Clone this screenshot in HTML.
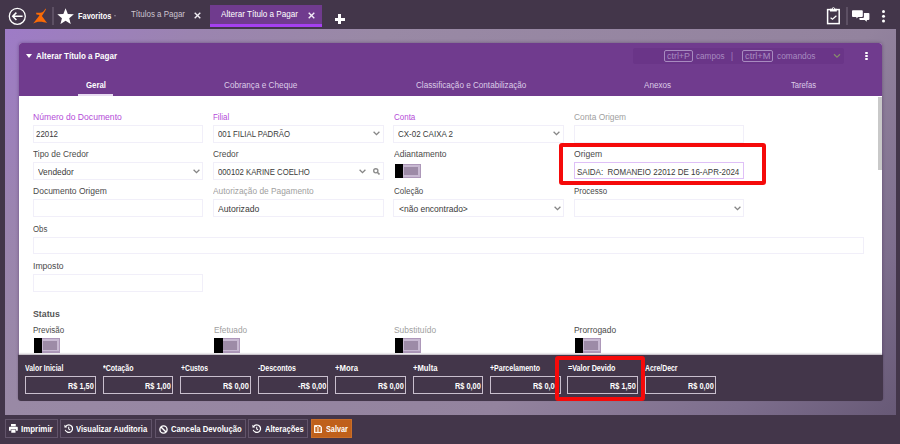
<!DOCTYPE html>
<html><head><meta charset="utf-8">
<style>
*{box-sizing:border-box;margin:0;padding:0}
html,body{width:900px;height:444px;overflow:hidden}
body{background:#43364a;font-family:"Liberation Sans",sans-serif;font-size:10px;color:#333;position:relative}
.abs{position:absolute}
.t{position:absolute;white-space:pre;transform-origin:0 50%;line-height:12px;height:12px}
#bg{left:4.7px;top:28.700px;width:890.900px;height:386.500px;background:linear-gradient(135deg,#9e7bc7 0%,#9b84b0 15%,#9989a5 30%,#93839e 68%,#7d6e8d 87%,#675976 100%)}
#card{left:19.1px;top:43px;width:862.600px;height:312px;background:#fff;border-radius:3px 3px 0 0;overflow:hidden}
#cardsh{left:19.1px;top:43px;width:862.600px;height:312px;border-radius:3px 3px 0 0;box-shadow:0 0 3.5px rgba(50,20,70,.45)}
#head{left:0;top:0;width:100%;height:53px;background:#703b8e}
.inp{position:absolute;height:18px;border:1px solid #f1eff9;background:#fff}
.tog{position:absolute;width:26px;height:14.6px;background:#ad98b9}
.tog b{position:absolute;left:8.3px;top:1.3px;right:1.3px;bottom:1.3px;background:#c8b9d2}
.tog u{position:absolute;left:9.2px;top:2.9px;right:3.2px;bottom:2.9px;background:#9d8ba7}
.tog i{position:absolute;left:0;top:0;width:8.3px;height:14.6px;background:#000}
#foot{left:18px;top:355px;width:865px;height:45.8px;background:#43364a;border-radius:0 0 3px 3px;box-shadow:0 -1px 2px rgba(40,20,50,.35)}
.fb{position:absolute;top:376.3px;width:70.8px;height:18px;border:1px solid #c9bfce}
.btn{position:absolute;top:419.4px;height:18.4px;border:1px solid #62546a}
.red{position:absolute;border:4px solid #f50a0a;border-radius:3px}
</style></head><body>
<div class="abs" id="bg"></div>

<!-- top bar -->
<div class="abs" style="left:0;top:0;width:900px;height:28.700px;background:#43364a"></div>
<svg class="abs" style="left:8px;top:7px" width="19" height="19" viewBox="0 0 19 19"><circle cx="9.3" cy="9.3" r="8" fill="none" stroke="#fff" stroke-width="1.3"/><path d="M14.6 9.3H5.2M8.4 5.6L4.7 9.3l3.7 3.7" fill="none" stroke="#fff" stroke-width="1.5"/></svg>
<svg class="abs" style="left:33px;top:8px" width="15" height="17" viewBox="0 0 15 17"><path d="M12.5.4C11 3 9.600 4.300 8.500 4.500 6.500 4.900 4.500 4.500 3 4.800L3.500 6.600C4.600 6.700 5.600 6.700 6.500 7L5.800 8.200.2 15.400C3 14 5 13.500 7.200 13.700 9.500 13.700 12 14.300 14.100 15.100L8.900 8C10.100 6.200 11.900 3.500 13 1.200z" fill="#f96a06"/></svg>
<div class="abs" style="left:52.1px;top:7.1px;width:1.800px;height:18.200px;background:#5d5064"></div>
<svg class="abs" style="left:57.400px;top:7.800px" width="17.200" height="16.600" viewBox="0 0 16 15.500" preserveAspectRatio="none"><path d="M8 .3l2.1 5.2 5.6.4-4.3 3.6 1.4 5.5L8 12l-4.8 3 1.4-5.5L.3 5.9l5.6-.4z" fill="#fff"/></svg>
<div class="abs" style="left:113.5px;top:15.3px;width:0;height:0;border-left:1.6px solid transparent;border-right:1.6px solid transparent;border-top:2px solid #8d8191"></div>
<svg class="abs" style="left:194.400px;top:11.600px" width="7" height="7" viewBox="0 0 7 7"><path d="M.7.7l5.600 5.600M6.300.7L.7 6.300" stroke="#f1edf3" stroke-width="1.350"/></svg>
<div class="abs" style="left:210px;top:5px;width:111.8px;height:21.7px;background:#703b8e;border-bottom:3px solid #a540f0"></div>
<svg class="abs" style="left:307.600px;top:11.600px" width="7" height="7" viewBox="0 0 7 7"><path d="M.7.7l5.600 5.600M6.300.7L.7 6.300" stroke="#f4eef8" stroke-width="1.350"/></svg>
<div class="abs" style="left:334.800px;top:17.700px;width:10.200px;height:3px;background:#fff"></div>
<div class="abs" style="left:338.200px;top:14.400px;width:2.900px;height:9.600px;background:#fff"></div>
<!-- right icons -->
<svg class="abs" style="left:826px;top:6px" width="15" height="19" viewBox="0 0 15 19"><rect x="1.6" y="3.6" width="11.6" height="14" fill="none" stroke="#fff" stroke-width="1.5"/><path d="M4 5.600V2.700h1.900a1.500 1.500 0 0 1 3 0h1.900v2.900z" fill="#fff"/><circle cx="7.400" cy="2.600" r=".6" fill="#43364a"/><path d="M4.6 11.7l1.9 1.5 3.9-3.5" fill="none" stroke="#fff" stroke-width="1.2"/></svg>
<div class="abs" style="left:846.300px;top:7px;width:1.800px;height:18.200px;background:#5d5064"></div>
<svg class="abs" style="left:852px;top:10px" width="18" height="13" viewBox="0 0 18 13"><path d="M.9.2h9a.9.9 0 0 1 .9.9v4.9a.9.9 0 0 1-.9.9H6.2L4.4 8.6V6.9H.9A.9.9 0 0 1 0 6V1.100A.9.9 0 0 1 .9.200z" fill="#fff"/><path d="M11.900 2.900h4.600a.9.900 0 0 1 .900.900v5.200a.9.900 0 0 1-.900.900h-1.700v1.900l-2.100-1.900H8.300a.9.900 0 0 1-.900-.900V8h3.600a.9.900 0 0 0 .900-.900z" fill="#fff"/></svg>
<div class="abs" style="left:881.6px;top:9.700px;width:3.200px;height:3.200px;border-radius:50%;background:#fff;box-shadow:0 4.700px 0 #fff,0 9.400px 0 #fff"></div>

<!-- card -->
<div class="abs" id="cardsh"></div>
<div class="abs" id="card">
 <div class="abs" id="head"></div>
</div>
<div class="abs" style="left:26px;top:53.7px;width:0;height:0;border-left:3.500px solid transparent;border-right:3.500px solid transparent;border-top:4px solid #fff"></div>
<div class="abs" style="left:632.5px;top:47.5px;width:211.5px;height:16.3px;background:#6a3588;border-radius:2px"></div>
<div class="abs" style="left:663.7px;top:49.5px;width:29.4px;height:12.5px;border:1px solid #a88bc0;border-radius:2px"></div>
<div class="abs" style="left:741.7px;top:49.5px;width:31.8px;height:12.500px;border:1px solid #a88bc0;border-radius:2px"></div>
<svg class="abs" style="left:833px;top:53px" width="8" height="6" viewBox="0 0 8 6"><path d="M1 1.200l3 3 3-3" fill="none" stroke="#868a6c" stroke-width="1.250"/></svg>
<div class="abs" style="left:865px;top:51.500px;width:2.800px;height:2.800px;border-radius:50%;background:#fff;box-shadow:0 3px 0 #fff,0 6px 0 #fff"></div>

<!-- active tab underline -->
<div class="abs" style="left:78px;top:93.800px;width:34.500px;height:2.400px;background:#e8dcf1"></div>

<!-- scrollbar -->
<div class="abs" style="left:878.2px;top:96.500px;width:3.400px;height:73.500px;background:#c9c9c9"></div>

<!-- inputs -->
<div class="inp" style="left:33px;top:124.500px;width:170.300px"></div>
<div class="inp" style="left:213px;top:124.500px;width:170.500px"></div>
<div class="inp" style="left:393px;top:124.500px;width:170.500px"></div>
<div class="inp" style="left:573.700px;top:124.500px;width:170.300px"></div>
<div class="inp" style="left:33px;top:162px;width:170.300px"></div>
<div class="inp" style="left:213px;top:162px;width:170.500px"></div>
<div class="tog" style="left:394.900px;top:163.700px"><b></b><u></u><i></i></div>
<div class="inp" style="left:574px;top:162.300px;width:169.500px;height:17px;border-color:#dfc0f7"></div>
<div class="inp" style="left:33px;top:198.800px;width:170.300px"></div>
<div class="inp" style="left:213px;top:198.800px;width:170.500px"></div>
<div class="inp" style="left:393px;top:198.800px;width:170.500px"></div>
<div class="inp" style="left:573.700px;top:198.800px;width:170.300px"></div>
<div class="inp" style="left:33px;top:236.600px;width:831px;height:17.800px"></div>
<div class="inp" style="left:33px;top:273.600px;width:170.300px"></div>
<div class="tog" style="left:34.200px;top:338.100px"><b></b><u></u><i></i></div>
<div class="tog" style="left:214.300px;top:338.100px"><b></b><u></u><i></i></div>
<div class="tog" style="left:394.900px;top:338.100px"><b></b><u></u><i></i></div>
<div class="tog" style="left:575px;top:338.100px"><b></b><u></u><i></i></div>

<!-- chevrons -->
<svg class="abs" style="left:193px;top:169px" width="7" height="5" viewBox="0 0 7 5"><path d="M.6.800l2.900 2.900L6.400.800" fill="none" stroke="#858585" stroke-width="1.300"/></svg>
<svg class="abs" style="left:373.300px;top:131.300px" width="7" height="5" viewBox="0 0 7 5"><path d="M.6.800l2.900 2.900L6.400.800" fill="none" stroke="#858585" stroke-width="1.300"/></svg>
<svg class="abs" style="left:553.300px;top:131.300px" width="7" height="5" viewBox="0 0 7 5"><path d="M.6.800l2.900 2.900L6.400.800" fill="none" stroke="#858585" stroke-width="1.300"/></svg>
<svg class="abs" style="left:359.200px;top:169px" width="7" height="5" viewBox="0 0 7 5"><path d="M.6.800l2.900 2.900L6.400.800" fill="none" stroke="#858585" stroke-width="1.300"/></svg>
<svg class="abs" style="left:373px;top:168px" width="7" height="7" viewBox="0 0 7 7"><circle cx="2.800" cy="2.800" r="2.100" fill="none" stroke="#8c8c8c" stroke-width="1.350"/><path d="M4.300 4.300L6.500 6.500" stroke="#8c8c8c" stroke-width="1.600"/></svg>
<svg class="abs" style="left:553.500px;top:206px" width="7" height="5" viewBox="0 0 7 5"><path d="M.6.800l2.900 2.900L6.400.800" fill="none" stroke="#858585" stroke-width="1.300"/></svg>
<svg class="abs" style="left:733.500px;top:206px" width="7" height="5" viewBox="0 0 7 5"><path d="M.6.800l2.900 2.900L6.400.800" fill="none" stroke="#858585" stroke-width="1.300"/></svg>

<!-- footer totals -->
<div class="abs" id="foot"></div>
<div class="fb" style="left:25px"></div>
<div class="fb" style="left:102.500px"></div>
<div class="fb" style="left:180px"></div>
<div class="fb" style="left:257.500px"></div>
<div class="fb" style="left:335px"></div>
<div class="fb" style="left:412.500px"></div>
<div class="fb" style="left:490px"></div>
<div class="fb" style="left:567.300px"></div>
<div class="fb" style="left:644.800px"></div>

<!-- bottom toolbar -->
<div class="abs" style="left:0;top:414.900px;width:900px;height:30px;background:#43364a"></div>
<div class="btn" style="left:5px;width:52.500px"></div>
<div class="btn" style="left:60px;width:91.700px"></div>
<div class="btn" style="left:155px;width:90.600px"></div>
<div class="btn" style="left:248.400px;width:59.500px"></div>
<div class="btn" style="left:311px;width:41.300px;background:#bf601b;border-color:#ca6e29"></div>
<!-- button icons -->
<svg class="abs" style="left:9px;top:424.200px" width="8.800" height="8.800" preserveAspectRatio="none" viewBox="0 0 10 9"><path d="M2.300 0h5.400v2.400H2.300zM.8 2.800h8.400a.8.800 0 0 1 .8.800v3.200H8V5.400H2v1.400H0V3.600a.8.800 0 0 1 .8-.8zM2.600 6h4.800v3H2.600z" fill="#fff"/></svg>
<svg class="abs" style="left:63.500px;top:424px" width="9.400" height="9.400" viewBox="0 0 10 10"><path d="M2 2.400A4 4 0 1 1 1.300 6.300" fill="none" stroke="#fff" stroke-width="1.300"/><path d="M.3.800l.3 3.100 3-.5z" fill="#fff"/><path d="M5 2.900v2.300l1.500 1" fill="none" stroke="#fff" stroke-width="1.100"/></svg>
<svg class="abs" style="left:159px;top:424.700px" width="9" height="9" viewBox="0 0 9 9"><circle cx="4.500" cy="4.500" r="3.600" fill="none" stroke="#fff" stroke-width="1.400"/><path d="M2 2l5 5" stroke="#fff" stroke-width="1.400"/></svg>
<svg class="abs" style="left:252.400px;top:424px" width="9.400" height="9.400" viewBox="0 0 10 10"><path d="M2 2.400A4 4 0 1 1 1.300 6.300" fill="none" stroke="#fff" stroke-width="1.300"/><path d="M.3.800l.3 3.100 3-.5z" fill="#fff"/><path d="M5 2.900v2.300l1.500 1" fill="none" stroke="#fff" stroke-width="1.100"/></svg>
<svg class="abs" style="left:314.300px;top:424.800px" width="8" height="8.100" viewBox="0 0 8 8.100"><path d="M.9 0h5L8 1.900v5.300a.9.900 0 0 1-.9.900H.9A.9.900 0 0 1 0 7.200V.9A.9.900 0 0 1 .9 0z" fill="#fdf3ea"/><rect x="1.300" y="2" width="2.100" height="4.900" fill="#c8702c"/><rect x="4.500" y="2" width="2.100" height="4.900" fill="#c8702c"/><rect x="3" y=".9" width="1.900" height="1.100" fill="#d99055"/></svg>

<div class="t" style="left:77.7px;top:9.58px;font-size:9px;color:#fff;transform:scaleX(0.8219);font-weight:bold">Favoritos</div>
<div class="t" style="left:131.0px;top:8.09px;font-size:8.7px;color:#cdc5d1;transform:scaleX(0.9165)">Títulos a Pagar</div>
<div class="t" style="left:221.0px;top:8.09px;font-size:8.7px;color:#fff;transform:scaleX(0.9342)">Alterar Título a Pagar</div>
<div class="t" style="left:36.0px;top:49.82px;font-size:8.3px;color:#fff;transform:scaleX(0.9652);font-weight:bold">Alterar Título a Pagar</div>
<div class="t" style="left:667.0px;top:50.02px;font-size:8.3px;color:#a88bc0;transform:scaleX(1.0721)">ctrl+P</div>
<div class="t" style="left:695.7px;top:50.02px;font-size:8.3px;color:#a88bc0;transform:scaleX(0.9841)">campos</div>
<div class="t" style="left:731.0px;top:50.02px;font-size:8.3px;color:#a88bc0;transform:scaleX(0.9275)">|</div>
<div class="t" style="left:745.0px;top:50.02px;font-size:8.3px;color:#a88bc0;transform:scaleX(1.1170)">ctrl+M</div>
<div class="t" style="left:776.5px;top:50.02px;font-size:8.3px;color:#a88bc0;transform:scaleX(1.0057)">comandos</div>
<div class="t" style="left:85.5px;top:79.42px;font-size:8.3px;color:#fff;transform:scaleX(0.9426);font-weight:bold">Geral</div>
<div class="t" style="left:223.7px;top:79.42px;font-size:8.3px;color:#dccbe8;transform:scaleX(0.9870)">Cobrança e Cheque</div>
<div class="t" style="left:415.5px;top:79.42px;font-size:8.3px;color:#dccbe8;transform:scaleX(0.9802)">Classificação e Contabilização</div>
<div class="t" style="left:644.2px;top:79.42px;font-size:8.3px;color:#dccbe8;transform:scaleX(0.9752)">Anexos</div>
<div class="t" style="left:790.5px;top:79.42px;font-size:8.3px;color:#dccbe8;transform:scaleX(0.9185)">Tarefas</div>
<div class="t" style="left:33.2px;top:110.72px;font-size:8.3px;color:#b44bd8;transform:scaleX(1.0352)">Número do Documento</div>
<div class="t" style="left:36.3px;top:128.42px;font-size:8.6px;color:#3a3a3a;transform:scaleX(0.9203)">22012</div>
<div class="t" style="left:213.3px;top:110.72px;font-size:8.3px;color:#b44bd8;transform:scaleX(0.9495)">Filial</div>
<div class="t" style="left:217.5px;top:128.42px;font-size:8.6px;color:#3a3a3a;transform:scaleX(0.9026)">001 FILIAL PADRÃO</div>
<div class="t" style="left:393.7px;top:110.72px;font-size:8.3px;color:#b44bd8;transform:scaleX(0.9620)">Conta</div>
<div class="t" style="left:398.0px;top:128.42px;font-size:8.6px;color:#3a3a3a;transform:scaleX(0.9285)">CX-02 CAIXA 2</div>
<div class="t" style="left:573.7px;top:110.72px;font-size:8.3px;color:#a0a0a0;transform:scaleX(1.0086)">Conta Origem</div>
<div class="t" style="left:33.2px;top:148.12px;font-size:8.3px;color:#4a4a4a;transform:scaleX(1.0100)">Tipo de Credor</div>
<div class="t" style="left:37.5px;top:165.72px;font-size:8.6px;color:#3a3a3a;transform:scaleX(0.9729)">Vendedor</div>
<div class="t" style="left:213.3px;top:148.12px;font-size:8.3px;color:#4a4a4a;transform:scaleX(1.0049)">Credor</div>
<div class="t" style="left:217.5px;top:165.72px;font-size:8.6px;color:#3a3a3a;transform:scaleX(0.9022)">000102 KARINE COELHO</div>
<div class="t" style="left:393.7px;top:148.12px;font-size:8.3px;color:#4a4a4a;transform:scaleX(1.0273)">Adiantamento</div>
<div class="t" style="left:573.7px;top:148.12px;font-size:8.3px;color:#4a4a4a;transform:scaleX(1.0330)">Origem</div>
<div class="t" style="left:577.0px;top:165.72px;font-size:8.6px;color:#3a3a3a;transform:scaleX(0.9284)">SAIDA:  ROMANEIO 22012 DE 16-APR-2024</div>
<div class="t" style="left:33.2px;top:185.42px;font-size:8.3px;color:#4a4a4a;transform:scaleX(1.0259)">Documento Origem</div>
<div class="t" style="left:213.3px;top:185.42px;font-size:8.3px;color:#a0a0a0;transform:scaleX(1.0061)">Autorização de Pagamento</div>
<div class="t" style="left:217.5px;top:202.92px;font-size:8.6px;color:#3a3a3a;transform:scaleX(1.0050)">Autorizado</div>
<div class="t" style="left:393.7px;top:185.42px;font-size:8.3px;color:#4a4a4a;transform:scaleX(0.9621)">Coleção</div>
<div class="t" style="left:398.7px;top:202.92px;font-size:8.6px;color:#3a3a3a;transform:scaleX(0.9862)">&lt;não encontrado&gt;</div>
<div class="t" style="left:573.7px;top:185.42px;font-size:8.3px;color:#4a4a4a;transform:scaleX(0.9568)">Processo</div>
<div class="t" style="left:33.2px;top:222.52px;font-size:8.3px;color:#4a4a4a;transform:scaleX(0.9396)">Obs</div>
<div class="t" style="left:33.2px;top:259.92px;font-size:8.3px;color:#4a4a4a;transform:scaleX(1.0367)">Imposto</div>
<div class="t" style="left:33.2px;top:308.02px;font-size:8.6px;color:#555;transform:scaleX(1.0203);font-weight:bold">Status</div>
<div class="t" style="left:33.2px;top:324.32px;font-size:8.3px;color:#4a4a4a;transform:scaleX(0.9634)">Previsão</div>
<div class="t" style="left:213.7px;top:324.32px;font-size:8.3px;color:#a0a0a0;transform:scaleX(0.9964)">Efetuado</div>
<div class="t" style="left:393.7px;top:324.32px;font-size:8.3px;color:#a0a0a0;transform:scaleX(1.0141)">Substituído</div>
<div class="t" style="left:574.2px;top:324.32px;font-size:8.3px;color:#4a4a4a;transform:scaleX(1.0141)">Prorrogado</div>
<div class="t" style="left:25.0px;top:363.16px;font-size:8.2px;color:#fff;transform:scaleX(0.8415);font-weight:bold">Valor Inicial</div>
<div class="t" style="left:102.5px;top:363.16px;font-size:8.2px;color:#fff;transform:scaleX(0.8592);font-weight:bold">*Cotação</div>
<div class="t" style="left:180.5px;top:363.16px;font-size:8.2px;color:#fff;transform:scaleX(0.8300);font-weight:bold">+Custos</div>
<div class="t" style="left:257.5px;top:363.16px;font-size:8.2px;color:#fff;transform:scaleX(0.8521);font-weight:bold">-Descontos</div>
<div class="t" style="left:335.0px;top:363.16px;font-size:8.2px;color:#fff;transform:scaleX(0.9448);font-weight:bold">+Mora</div>
<div class="t" style="left:412.5px;top:363.16px;font-size:8.2px;color:#fff;transform:scaleX(0.9361);font-weight:bold">+Multa</div>
<div class="t" style="left:490.0px;top:363.16px;font-size:8.2px;color:#fff;transform:scaleX(0.8549);font-weight:bold">+Parcelamento</div>
<div class="t" style="left:567.5px;top:363.16px;font-size:8.2px;color:#fff;transform:scaleX(0.8733);font-weight:bold">=Valor Devido</div>
<div class="t" style="left:645.0px;top:363.16px;font-size:8.2px;color:#fff;transform:scaleX(0.8401);font-weight:bold">Acre/Decr</div>
<div class="t" style="left:67.5px;top:379.81px;font-size:9.2px;color:#fff;transform:scaleX(0.8016);font-weight:bold">R$ 1,50</div>
<div class="t" style="left:145.0px;top:379.81px;font-size:9.2px;color:#fff;transform:scaleX(0.8016);font-weight:bold">R$ 1,00</div>
<div class="t" style="left:222.5px;top:379.81px;font-size:9.2px;color:#fff;transform:scaleX(0.8016);font-weight:bold">R$ 0,00</div>
<div class="t" style="left:297.5px;top:379.81px;font-size:9.2px;color:#fff;transform:scaleX(0.8028);font-weight:bold">-R$ 0,00</div>
<div class="t" style="left:377.5px;top:379.81px;font-size:9.2px;color:#fff;transform:scaleX(0.8016);font-weight:bold">R$ 0,00</div>
<div class="t" style="left:455.0px;top:379.81px;font-size:9.2px;color:#fff;transform:scaleX(0.8016);font-weight:bold">R$ 0,00</div>
<div class="t" style="left:532.5px;top:379.81px;font-size:9.2px;color:#fff;transform:scaleX(0.8016);font-weight:bold">R$ 0,00</div>
<div class="t" style="left:610.0px;top:379.81px;font-size:9.2px;color:#fff;transform:scaleX(0.8016);font-weight:bold">R$ 1,50</div>
<div class="t" style="left:687.5px;top:379.81px;font-size:9.2px;color:#fff;transform:scaleX(0.8016);font-weight:bold">R$ 0,00</div>
<div class="t" style="left:21.3px;top:422.99px;font-size:8.4px;color:#fff;transform:scaleX(0.9458);font-weight:bold">Imprimir</div>
<div class="t" style="left:76.3px;top:422.99px;font-size:8.4px;color:#fff;transform:scaleX(0.9159);font-weight:bold">Visualizar Auditoria</div>
<div class="t" style="left:170.8px;top:422.99px;font-size:8.4px;color:#fff;transform:scaleX(0.9217);font-weight:bold">Cancela Devolução</div>
<div class="t" style="left:264.7px;top:422.99px;font-size:8.4px;color:#fff;transform:scaleX(0.9059);font-weight:bold">Alterações</div>
<div class="t" style="left:325.9px;top:422.99px;font-size:8.4px;color:#fff;transform:scaleX(0.8666);font-weight:bold">Salvar</div>

<!-- red highlight boxes -->
<div class="red" style="left:559.200px;top:143px;width:207.300px;height:41.500px"></div>
<div class="red" style="left:555.200px;top:355.700px;width:89.800px;height:45px"></div>
</body></html>
